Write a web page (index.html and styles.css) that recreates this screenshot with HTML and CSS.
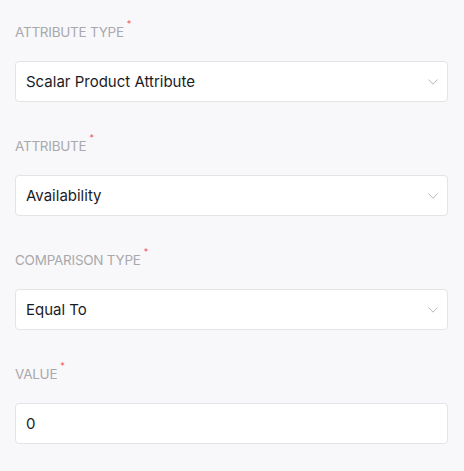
FILE: index.html
```html
<!DOCTYPE html>
<html>
<head>
<meta charset="utf-8">
<link rel="stylesheet" href="styles.css">
</head>
<body>
<form class="form">
  <div class="field">
    <label class="label">Attribute Type<span class="req">*</span></label>
    <div class="select">
      <span class="value">Scalar Product Attribute</span>
      <svg class="chev" width="10" height="6" viewBox="0 0 10 6"><path d="M0.5 0.5 L5 5.2 L9.5 0.5" fill="none" stroke="#b8b8bc" stroke-width="1"/></svg>
    </div>
  </div>
  <div class="field">
    <label class="label">Attribute<span class="req">*</span></label>
    <div class="select">
      <span class="value">Availability</span>
      <svg class="chev" width="10" height="6" viewBox="0 0 10 6"><path d="M0.5 0.5 L5 5.2 L9.5 0.5" fill="none" stroke="#b8b8bc" stroke-width="1"/></svg>
    </div>
  </div>
  <div class="field">
    <label class="label">Comparison Type<span class="req">*</span></label>
    <div class="select">
      <span class="value">Equal To</span>
      <svg class="chev" width="10" height="6" viewBox="0 0 10 6"><path d="M0.5 0.5 L5 5.2 L9.5 0.5" fill="none" stroke="#b8b8bc" stroke-width="1"/></svg>
    </div>
  </div>
  <div class="field">
    <label class="label">Value<span class="req">*</span></label>
    <div class="select input">
      <span class="value">0</span>
    </div>
  </div>
</form>
</body>
</html>
```
FILE: styles.css
```css
html, body {
  margin: 0;
  background: #f8f8fa;
}
body {
  font-family: Inter, "Noto Sans", sans-serif;
  padding: 22px 16px 0 15px;
}
.form {
  display: flex;
  flex-direction: column;
  gap: 34px;
}
.field {
  display: flex;
  flex-direction: column;
  gap: 19px;
}
.label {
  display: block;
  height: 20px;
  line-height: 20px;
  font-size: 13.5px;
  letter-spacing: -0.25px;
  text-transform: uppercase;
  color: #a9a9ad;
}
.req {
  color: #f05252;
  font-size: 9px;
  position: relative;
  top: -10px;
  left: 3px;
}
.select {
  box-sizing: border-box;
  height: 41px;
  background: #fff;
  border: 1px solid #e4e4e7;
  border-radius: 4px;
  display: flex;
  align-items: center;
  justify-content: space-between;
  padding: 0 9px 0 10px;
}
.value {
  font-size: 15px;
  color: #1c1c1f;
}
.chev {
  display: block;
}
```
